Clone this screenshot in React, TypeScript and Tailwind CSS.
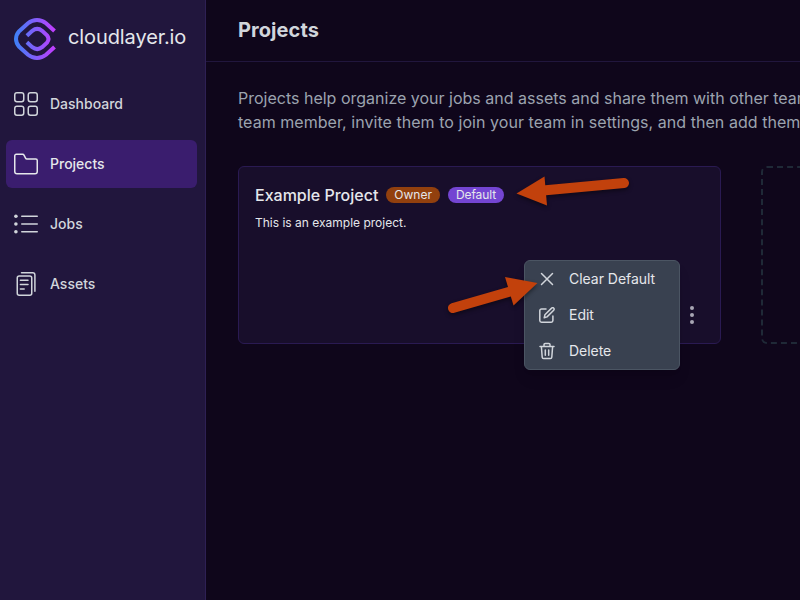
import type { ReactNode } from "react";

function Logo() {
  return (
    <svg width="42" height="42" viewBox="0 0 42 42" fill="none" stroke="url(#brand)" strokeWidth="4">
      <defs>
        <linearGradient id="brand" gradientUnits="userSpaceOnUse" x1="0" y1="21" x2="42" y2="21">
          <stop offset="0" stopColor="#3b82f6" />
          <stop offset="1" stopColor="#c63bff" />
        </linearGradient>
      </defs>
      <path d="M40.5 13 L32 5.2 Q28 2 23 2 Q18 2 14 5.2 L5.2 13.2 Q2 16.8 2 21 Q2 25.2 5.2 28.8 L14 36.8 Q18 40 23 40 Q28 40 32 36.8 L40.5 29" />
      <path d="M12.9 17.7 L18.3 12.8 Q23.2 9 28.1 12.8 L33 17.4 Q36 21 33 24.6 L28.1 29.2 Q23.2 33 18.3 29.2 L12.9 24.3" />
    </svg>
  );
}

const iconProps = {
  width: 24,
  height: 24,
  viewBox: "0 0 24 24",
  fill: "none",
  stroke: "currentColor",
  strokeWidth: 1.5,
  strokeLinecap: "round" as const,
  strokeLinejoin: "round" as const,
};

function GridIcon() {
  return (
    <svg {...iconProps}>
      <rect x=".75" y=".75" width="9" height="9" rx="2.2" />
      <rect x="14.25" y=".75" width="9" height="9" rx="2.2" />
      <rect x=".75" y="14.25" width="9" height="9" rx="2.2" />
      <rect x="14.25" y="14.25" width="9" height="9" rx="2.2" />
    </svg>
  );
}

function FolderIcon() {
  return (
    <svg {...iconProps}>
      <path d="M.75 19.5V3.75a1.5 1.5 0 0 1 1.5-1.5h6.4a1.5 1.5 0 0 1 1.35.83l1.55 3.1a1.5 1.5 0 0 0 1.34.82h8.86a1.5 1.5 0 0 1 1.5 1.5v11a2.25 2.25 0 0 1-2.25 2.25H3A2.25 2.25 0 0 1 .75 19.5Z" />
    </svg>
  );
}

function ListIcon() {
  return (
    <svg {...iconProps}>
      <path d="M7.75 4.25h15.5M7.75 12h15.5M7.75 19.75h15.5" />
      <g fill="currentColor" stroke="none">
        <circle cx="1.9" cy="4.25" r="1.8" />
        <circle cx="1.9" cy="12" r="1.8" />
        <circle cx="1.9" cy="19.75" r="1.8" />
      </g>
    </svg>
  );
}

function AssetsIcon() {
  return (
    <svg {...iconProps}>
      <rect x="3.25" y="4" width="14.5" height="19.25" rx="2" />
      <path d="M7.5 .75h11.2a2.2 2.2 0 0 1 2.2 2.2v16.3M6.4 8.25h7.6M6.4 12.6h7.6M6.4 17.1h3.8" />
    </svg>
  );
}

function EditIcon() {
  return (
    <svg width="16" height="16" viewBox="0 0 16 16" fill="none" stroke="currentColor" strokeWidth="1.5" strokeLinecap="round" strokeLinejoin="round">
      <path d="M7 2H2.5A1.7 1.7 0 0 0 .8 3.7v9.8a1.7 1.7 0 0 0 1.7 1.7h9.7a1.7 1.7 0 0 0 1.7-1.7V9" />
      <path d="m5.2 10.8.7-3L12.6 1.1a1.45 1.45 0 0 1 2.1 0 1.45 1.45 0 0 1 0 2.1L8 9.9Z" />
    </svg>
  );
}

function TrashIcon() {
  return (
    <svg width="16" height="16" viewBox="0 0 16 16" fill="none" stroke="currentColor" strokeWidth="1.5" strokeLinecap="round" strokeLinejoin="round" className="overflow-visible">
      <path d="M1 3.5h14M5 3.3V1.6A1.2 1.2 0 0 1 6.2.4h3.6A1.2 1.2 0 0 1 11 1.6v1.7M2.4 3.7l.8 10.5a1.4 1.4 0 0 0 1.4 1.3h6.8a1.4 1.4 0 0 0 1.4-1.3l.8-10.5M6.3 7v5.2M9.7 7v5.2" />
    </svg>
  );
}

function CrossIcon() {
  return (
    <svg width="16" height="16" viewBox="0 0 16 16" fill="none" stroke="currentColor" strokeWidth="1.5" strokeLinecap="round">
      <path d="m2.5 2.5 11 11M13.5 2.5l-11 11" />
    </svg>
  );
}

function NavItem({ icon, label, active }: { icon: ReactNode; label: string; active?: boolean }) {
  return (
    <a className={`flex h-12 items-center gap-3 rounded-md px-2 text-sm font-medium ${active ? "bg-[#3a1d6e] text-[#e5e7eb]" : "text-[#d1d5db]"}`}>
      {icon}
      <span>{label}</span>
    </a>
  );
}

function MenuItem({ icon, label }: { icon: ReactNode; label: string }) {
  return (
    <button className="flex h-9 w-full items-center gap-3.5 px-3.5 text-left text-sm tracking-[-0.03px] text-[#e5e7eb]">
      <span className="text-[#d1d5db]">{icon}</span>
      <span>{label}</span>
    </button>
  );
}

export default function App() {
  return (
    <div className="relative flex h-[600px] w-[800px] overflow-hidden bg-[#0f061b] font-['Inter',sans-serif]">
      <aside className="w-[206px] shrink-0 border-r border-[#2e2054] bg-[#21163d]">
        <div className="flex h-[74px] items-center gap-3 pt-1 pl-3.5">
          <Logo />
          <span className="pb-1 text-xl leading-7 tracking-[-0.1px] text-[#e5e7eb]">cloudlayer.io</span>
        </div>
        <nav className="flex flex-col gap-3 pt-1.5 pr-2 pl-1.5">
          <NavItem icon={<GridIcon />} label="Dashboard" />
          <NavItem icon={<FolderIcon />} label="Projects" active />
          <NavItem icon={<ListIcon />} label="Jobs" />
          <NavItem icon={<AssetsIcon />} label="Assets" />
        </nav>
      </aside>

      <main className="min-w-0 flex-1">
        <header className="flex h-[62px] items-center border-b border-[#21163d] pb-0.5 pl-8">
          <h1 className="text-xl leading-7 font-bold tracking-[0.08px] text-[#d1d5db]">Projects</h1>
        </header>
        <div className="pt-6 pl-8">
          <p className="text-base leading-6 whitespace-nowrap text-[#9ca3af]">
            Projects help organize your jobs and assets and share them with other team
            <br />
            <span className="tracking-[0.045px]">team member, invite them to join your team in settings, and then add them</span>
          </p>
          <div className="mt-8 flex gap-10">
            <section className="relative h-[178px] w-[483px] shrink-0 rounded-md border border-[#2a1a52] bg-[#180e2b] px-4 pt-4">
              <div className="flex h-6 items-center gap-2">
                <h2 className="text-base leading-6 font-medium text-[#e5e7eb]">Example Project</h2>
                <span className="flex h-4 items-center rounded-full bg-[#92400e] px-2 text-xs text-[#e5e7eb]">Owner</span>
                <span className="flex h-4 items-center rounded-full bg-[#7445d2] px-2 text-xs tracking-[-0.1px] text-[#e5e7eb]">Default</span>
              </div>
              <p className="mt-1.5 text-xs leading-5 text-[#e5e7eb]">This is an example project.</p>
              <button className="absolute right-[26px] bottom-[19px] flex flex-col gap-[3px]">
                <i className="size-1 rounded-full bg-[#a8a6b4]" />
                <i className="size-1 rounded-full bg-[#a8a6b4]" />
                <i className="size-1 rounded-full bg-[#a8a6b4]" />
              </button>
            </section>
            <section className="h-[178px] w-[483px] shrink-0 rounded-md border-2 border-dashed border-[#1f2937]" />
          </div>
        </div>
      </main>

      <div className="absolute top-[260px] left-[524px] h-[110px] w-[156px] rounded-md border border-[#4b5563] bg-[#394150] shadow-lg">
        <MenuItem icon={<CrossIcon />} label="Clear Default" />
        <MenuItem icon={<EditIcon />} label="Edit" />
        <MenuItem icon={<TrashIcon />} label="Delete" />
      </div>

      <svg className="absolute inset-0 drop-shadow-[0_2px_2px_rgba(0,0,0,0.45)]" width="800" height="600" fill="#c2410c" stroke="#c2410c">
        <path d="M624 183 543 190.5" strokeWidth="10" strokeLinecap="round" />
        <path d="M516.5 193.5 544.5 176.5 547 205.5Z" stroke="none" />
        <path d="M453 308 512 291" strokeWidth="10" strokeLinecap="round" />
        <path d="M537.5 283 505 277 513.5 305.5Z" stroke="none" />
      </svg>
    </div>
  );
}
